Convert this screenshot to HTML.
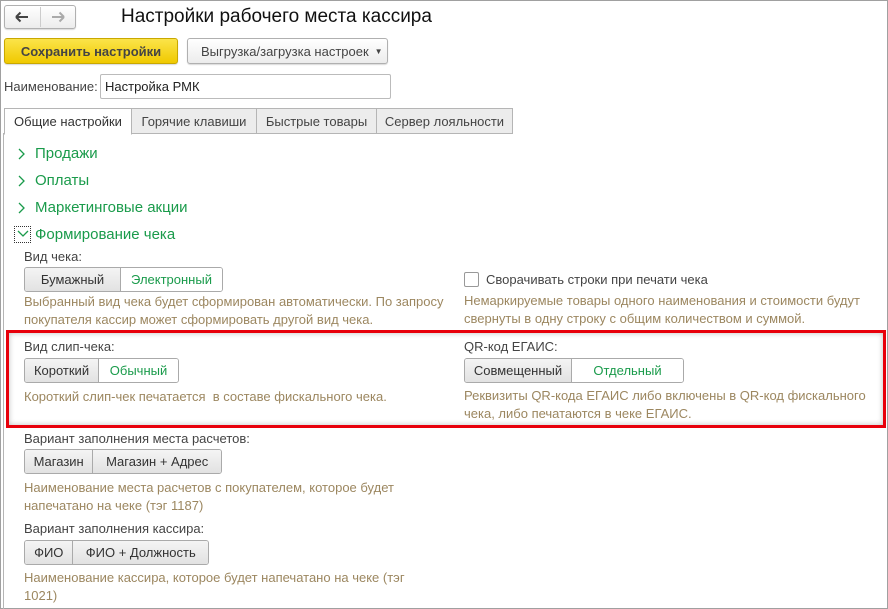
<!DOCTYPE html>
<html><head><meta charset="utf-8"><style>
*{box-sizing:border-box;margin:0;padding:0}
body{width:888px;height:609px;background:#fff;font-family:"Liberation Sans",Arial,sans-serif;font-size:13px;color:#444;position:relative;overflow:hidden}
.a{position:absolute;white-space:nowrap}
.win{position:absolute;left:0;top:0;width:888px;height:609px;border:1px solid #a0a0a0}
.pl{position:absolute;left:3px;top:133px;width:1px;height:476px;background:#b5b5b5}
.btn{position:absolute;height:24px;border:1px solid #b0b0b0;border-radius:3px;background:linear-gradient(#fff,#ececec);box-shadow:0 1px 1px rgba(0,0,0,.15)}
.seg{position:absolute;display:flex;height:25px;border:1px solid #aaa;border-radius:3px;overflow:hidden;font-size:13px}
.seg span{display:flex;align-items:center;justify-content:center;height:100%}
.seg .on{background:linear-gradient(#f4f4f4,#e2e2e2);color:#333;border-right:1px solid #aaa}
.seg .off{background:#fff;color:#1a9b4b}
.hint{color:#9c8760;line-height:18px;white-space:normal}
.sec{color:#1a9b4b;font-size:15px}
.tab{position:absolute;top:108px;height:26px;border:1px solid #b5b5b5;background:#ececec;display:flex;align-items:center;justify-content:center;font-size:13px;color:#444}
</style></head><body>
<div class="win"></div>
<div class="pl"></div>
<div class="btn" style="left:4px;top:5px;width:72px;height:24px"></div>
<div class="a" style="left:40px;top:7px;width:1px;height:20px;background:#ccc"></div>
<svg class="a" style="left:14px;top:11px" width="16" height="12"><path d="M2 6h12M2 6l4.5-4.5M2 6l4.5 4.5" stroke="#444" stroke-width="2" fill="none"/></svg>
<svg class="a" style="left:50px;top:11px" width="16" height="12"><path d="M2 6h12M14 6l-4.5-4.5M14 6l-4.5 4.5" stroke="#aaa" stroke-width="2" fill="none"/></svg>
<div class="a" style="left:121px;top:6px;font-size:19px;color:#111">Настройки рабочего места кассира</div>
<div class="btn" style="left:4px;top:38px;width:174px;height:26px;background:linear-gradient(#fbe44a,#f0c900);border-color:#c9a800;display:flex;align-items:center;justify-content:center;font-weight:bold;color:#444;font-size:13px">Сохранить настройки</div>
<div class="btn" style="left:187px;top:38px;width:201px;height:26px;display:flex;align-items:center;padding-left:13px;color:#444">Выгрузка/загрузка настроек <span style="font-size:8px;margin-left:6px">▼</span></div>
<div class="a" style="left:4px;top:79px">Наименование:</div>
<div class="a" style="left:100px;top:74px;width:291px;height:25px;border:1px solid #bbb;border-radius:2px;padding:4px 4px;color:#222">Настройка РМК</div>
<div class="tab" style="left:4px;width:128px;background:#fff;border-bottom-color:#fff;height:27px;color:#333">Общие настройки</div>
<div class="tab" style="left:131px;width:126px">Горячие клавиши</div>
<div class="tab" style="left:256px;width:121px">Быстрые товары</div>
<div class="tab" style="left:376px;width:137px">Сервер лояльности</div>
<svg class="a" style="left:17px;top:147px" width="10" height="14"><path d="M2 2l5 5-5 5" stroke="#1a9b4b" stroke-width="1.3" fill="none"/></svg>
<div class="a sec" style="left:35px;top:145px">Продажи</div>
<svg class="a" style="left:17px;top:174px" width="10" height="14"><path d="M2 2l5 5-5 5" stroke="#1a9b4b" stroke-width="1.3" fill="none"/></svg>
<div class="a sec" style="left:35px;top:172px">Оплаты</div>
<svg class="a" style="left:17px;top:201px" width="10" height="14"><path d="M2 2l5 5-5 5" stroke="#1a9b4b" stroke-width="1.3" fill="none"/></svg>
<div class="a sec" style="left:35px;top:199px">Маркетинговые акции</div>
<div class="a" style="left:14px;top:226px;width:17px;height:17px;border:1px dotted #333"></div>
<svg class="a" style="left:16px;top:229px" width="14" height="10"><path d="M2 2l5 5 5-5" stroke="#1a9b4b" stroke-width="1.3" fill="none"/></svg>
<div class="a sec" style="left:35px;top:226px">Формирование чека</div>
<div class="a" style="left:24px;top:249px">Вид чека:</div>
<div class="seg" style="left:24px;top:267px;width:199px"><span class="on" style="width:97px">Бумажный</span><span class="off" style="width:102px">Электронный</span></div>
<div class="a hint" style="left:24px;top:293px;width:420px">Выбранный вид чека будет сформирован автоматически. По запросу покупателя кассир может сформировать другой вид чека.</div>
<div class="a" style="left:464px;top:272px;width:15px;height:15px;border:1px solid #999;border-radius:2px"></div>
<div class="a" style="left:486px;top:272px">Сворачивать строки при печати чека</div>
<div class="a hint" style="left:464px;top:292px;width:420px">Немаркируемые товары одного наименования и стоимости будут свернуты в одну строку с общим количеством и суммой.</div>
<div class="a" style="left:6px;top:330px;width:880px;height:98px;border:3px solid #e8000b;box-shadow:inset 0 0 6px rgba(0,0,0,.25)"></div>
<div class="a" style="left:24px;top:339px">Вид слип-чека:</div>
<div class="seg" style="left:24px;top:358px;width:155px"><span class="on" style="width:75px">Короткий</span><span class="off" style="width:80px">Обычный</span></div>
<div class="a hint" style="left:24px;top:388px">Короткий слип-чек печатается&nbsp; в составе фискального чека.</div>
<div class="a" style="left:464px;top:339px">QR-код ЕГАИС:</div>
<div class="seg" style="left:464px;top:358px;width:220px"><span class="on" style="width:108px">Совмещенный</span><span class="off" style="width:112px">Отдельный</span></div>
<div class="a hint" style="left:464px;top:387px;width:410px">Реквизиты QR-кода ЕГАИС либо включены в QR-код фискального чека, либо печатаются в чеке ЕГАИС.</div>
<div class="a" style="left:24px;top:431px">Вариант заполнения места расчетов:</div>
<div class="seg" style="left:24px;top:449px;width:198px"><span class="on" style="width:69px">Магазин</span><span class="on" style="width:129px;border-right:0">Магазин + Адрес</span></div>
<div class="a hint" style="left:24px;top:479px;width:400px">Наименование места расчетов с покупателем, которое будет напечатано на чеке (тэг 1187)</div>
<div class="a" style="left:24px;top:521px">Вариант заполнения кассира:</div>
<div class="seg" style="left:24px;top:540px;width:185px"><span class="on" style="width:49px">ФИО</span><span class="on" style="width:136px;border-right:0">ФИО + Должность</span></div>
<div class="a hint" style="left:24px;top:569px;width:400px">Наименование кассира, которое будет напечатано на чеке (тэг 1021)</div>
</body></html>
